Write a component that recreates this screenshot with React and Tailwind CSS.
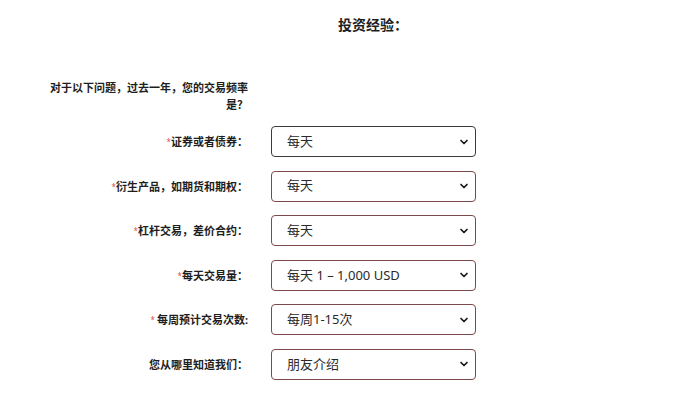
import { ChevronDown } from 'lucide-react';

const FONT = { fontFamily: '"Noto Sans", "Noto Sans CJK SC", sans-serif' };

const ROWS = [
  { label: '证券或者债券：', star: '*', value: '每天', dark: true },
  { label: '衍生产品，如期货和期权：', star: '*', value: '每天' },
  { label: '杠杆交易，差价合约：', star: '*', value: '每天' },
  { label: '每天交易量：', star: '*', value: '每天 1 – 1,000 USD' },
  { label: '每周预计交易次数:', star: '* ', value: '每周1-15次' },
  { label: '您从哪里知道我们：', star: '', value: '朋友介绍' },
];

function Row({ row }) {
  return (
    <div className="flex items-center">
      <div className="ml-[48px] w-[200px] text-right text-[11px] font-bold text-[#1e1e1e] leading-[17px]">
        {row.star && (
          <span className="text-[8px] text-[#d9534f] align-top font-normal">{row.star}</span>
        )}
        {row.label}
      </div>
      <div
        className={`ml-[23px] w-[205px] h-[31px] rounded-[4px] border bg-white flex items-center justify-between pl-[15px] pr-[5px] text-[13px] text-[#2a2a2a] ${
          row.dark ? 'border-[#3c3c3c]' : 'border-[#7d4a4c]'
        }`}
      >
        <span>{row.value}</span>
        <ChevronDown size={12} strokeWidth={3.5} className="text-[#1a1a1a]" />
      </div>
    </div>
  );
}

export default function App() {
  return (
    <div className="w-[700px] h-[410px] bg-white overflow-hidden" style={FONT}>
      <div className="pt-[15px] pl-[338px] text-[14px] font-bold text-[#1e1e1e] leading-[20px]">
        投资经验：
      </div>

      <div className="mt-[44px] ml-[48px] w-[200px] text-right text-[11px] font-bold text-[#1e1e1e] leading-[17px]">
        对于以下问题，过去一年，您的交易频率是？
      </div>

      <div className="mt-[13px] flex flex-col gap-[13.6px]">
        {ROWS.map((row) => (
          <Row key={row.label} row={row} />
        ))}
      </div>
    </div>
  );
}
